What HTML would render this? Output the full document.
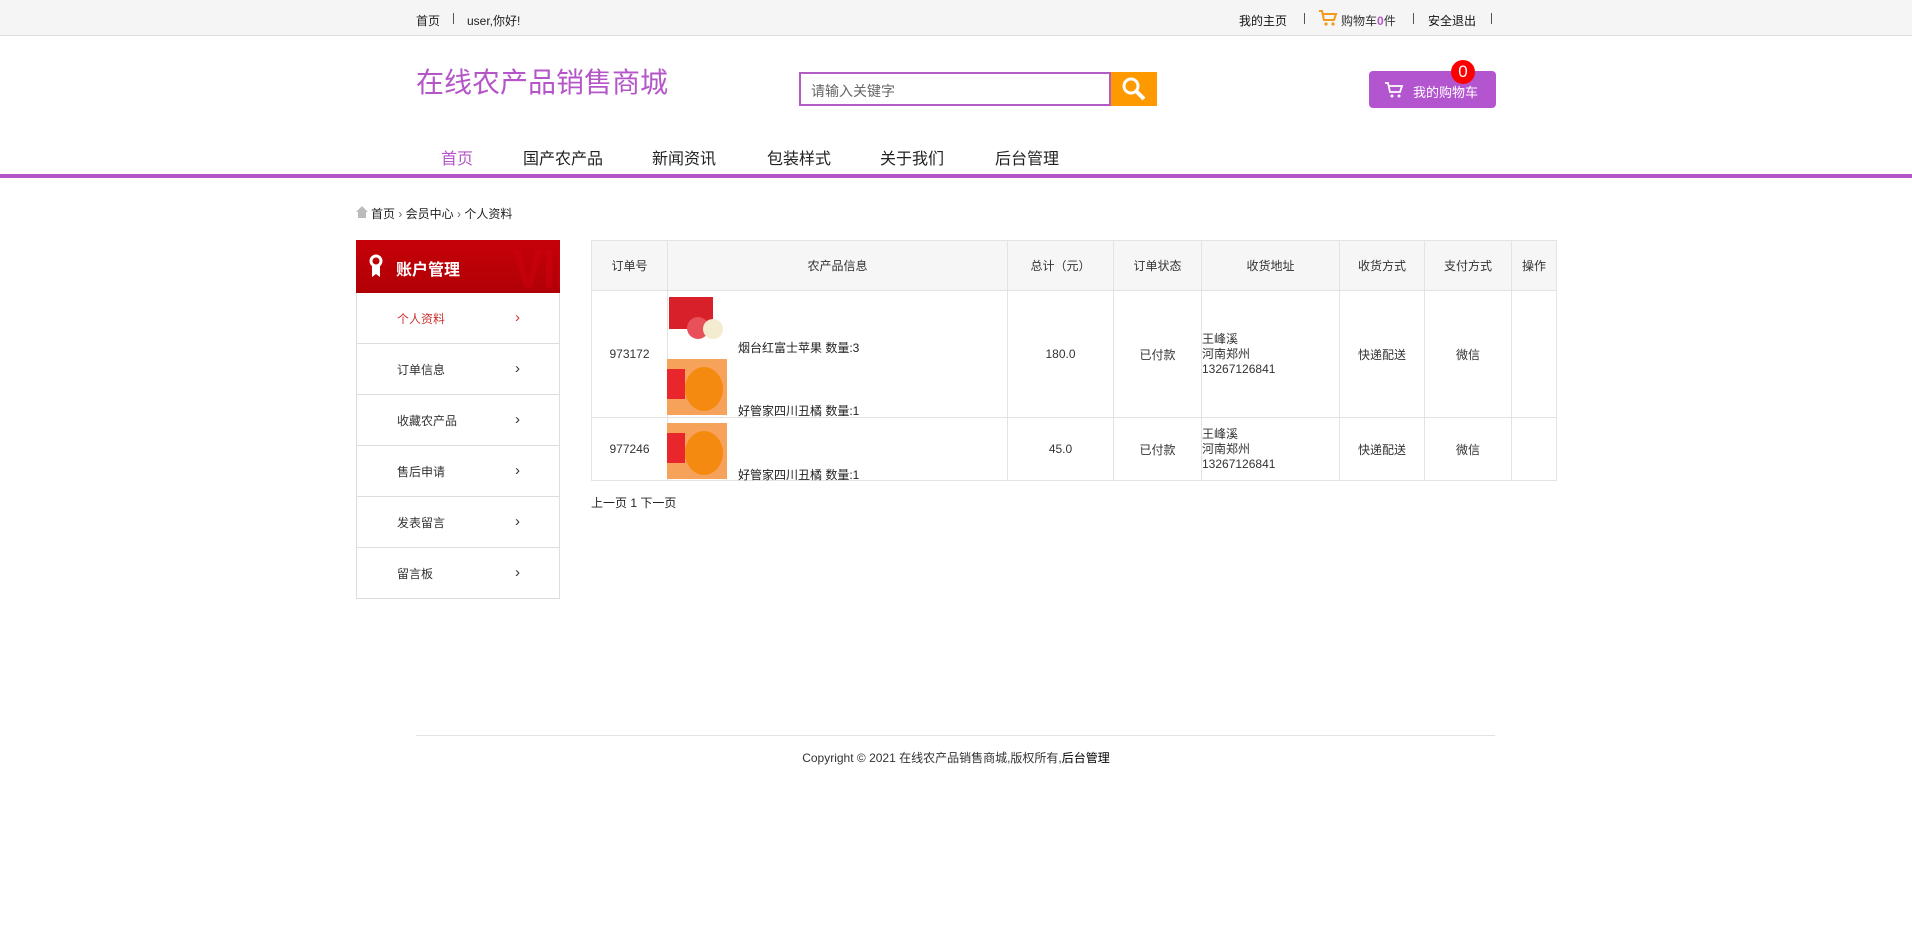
<!DOCTYPE html>
<html><head><meta charset="utf-8"><style>
*{margin:0;padding:0;box-sizing:border-box}
body{width:1912px;height:928px;background:#fff;font-family:"Liberation Sans","Noto Sans CJK SC",sans-serif;color:#333;position:relative;overflow:hidden;font-size:13px}
.a{position:absolute;white-space:nowrap}
.top{position:absolute;left:0;top:0;width:1912px;height:36px;background:#f5f5f5;border-bottom:1px solid #ddd}
.sep{position:absolute;top:13px;width:1px;height:11px;background:#555}
.nav{position:absolute;top:145px;font-size:16px;color:#222}
table{position:absolute;left:591px;top:240px;border-collapse:collapse;width:966px;font-size:12px;color:#333}
td,th{border:1px solid #e3e3e3;text-align:center;font-weight:normal}
th{background:#f6f6f6;height:50px}
.side{position:absolute;left:356px;width:204px;height:51px;border:1px solid #ddd;border-top:none;font-size:12px}
.side span{position:absolute;left:40px;top:17px}
.side i{position:absolute;left:158px;top:16px;font-style:normal;font-size:15px}
.apple{position:absolute;left:667px;width:60px;height:56px}
</style></head><body>
<div class="top"></div>
<div class="a" style="left:416px;top:12px;font-size:12px;color:#222">首页</div>
<div class="sep" style="left:453px"></div>
<div class="a" style="left:467px;top:12px;font-size:12px;color:#222">user,你好!</div>
<div class="a" style="left:1239px;top:12px;font-size:12px;color:#111">我的主页</div>
<div class="sep" style="left:1304px"></div>
<svg class="a" style="left:1318px;top:9px" width="20" height="18" viewBox="0 0 20 18"><path d="M1 2h3l2 9h10l2-6H5" fill="none" stroke="#f29a1a" stroke-width="2"/><circle cx="8" cy="15" r="1.6" fill="#f29a1a"/><circle cx="15" cy="15" r="1.6" fill="#f29a1a"/></svg>
<div class="a" style="left:1341px;top:12px;font-size:12px;color:#333">购物车<b style="color:#b455c8">0</b>件</div>
<div class="sep" style="left:1413px"></div>
<div class="a" style="left:1428px;top:12px;font-size:12px;color:#111">安全退出</div>
<div class="sep" style="left:1491px"></div>

<div class="a" style="left:416px;top:61px;font-size:28px;color:#b455c8">在线农产品销售商城</div>
<div class="a" style="left:799px;top:72px;width:312px;height:34px;border:2px solid #b35cc6;background:#fff"><span style="position:absolute;left:10px;top:7px;font-size:14px;color:#666">请输入关键字</span></div>
<div class="a" style="left:1111px;top:72px;width:46px;height:34px;background:#ff9900"><svg width="46" height="34"><circle cx="20" cy="14" r="7" fill="none" stroke="#fff" stroke-width="3"/><path d="M25 19l8 8" stroke="#fff" stroke-width="4"/></svg></div>
<div class="a" style="left:1369px;top:71px;width:127px;height:37px;background:#b455d0;border-radius:4px"><svg style="position:absolute;left:15px;top:10px" width="20" height="18" viewBox="0 0 20 18"><path d="M1 2h3l2 9h10l2-6H5" fill="none" stroke="#fff" stroke-width="1.8"/><circle cx="8" cy="15" r="1.5" fill="#fff"/><circle cx="15" cy="15" r="1.5" fill="#fff"/></svg><span style="position:absolute;left:44px;top:11px;color:#fff;font-size:13px">我的购物车</span></div>
<div class="a" style="left:1451px;top:60px;width:24px;height:24px;border-radius:50%;background:#f00;color:#fff;font-size:17px;text-align:center;line-height:24px">0</div>

<div class="nav" style="left:441px;color:#b455c8">首页</div>
<div class="nav" style="left:523px">国产农产品</div>
<div class="nav" style="left:652px">新闻资讯</div>
<div class="nav" style="left:767px">包装样式</div>
<div class="nav" style="left:880px">关于我们</div>
<div class="nav" style="left:995px">后台管理</div>
<div class="a" style="left:0;top:174px;width:1912px;height:4px;background:#b455c8"></div>

<svg class="a" style="left:356px;top:206px" width="12" height="12"><path d="M6 0L0 6h2v6h8V6h2z" fill="#bbb"/></svg>
<div class="a" style="left:371px;top:205px;font-size:12px;color:#222">首页 <span style="color:#666">›</span> 会员中心 <span style="color:#666">›</span> 个人资料</div>

<div class="a" style="left:356px;top:240px;width:204px;height:53px;background:linear-gradient(#c60008,#b00006);overflow:hidden">
<span style="position:absolute;left:148px;top:-4px;font-size:56px;color:rgba(210,0,20,.5);font-weight:bold;transform:scaleX(.8)">VIP</span>
<svg style="position:absolute;left:13px;top:14px" width="14" height="24"><circle cx="7" cy="7" r="5" fill="none" stroke="#fff" stroke-width="3"/><path d="M3 12v11l4-3 4 3V12" fill="#fff"/></svg>
<span style="position:absolute;left:40px;top:16px;font-size:16px;color:#fff;font-weight:bold">账户管理</span></div>
<div class="side" style="top:293px"><span style="color:#c33">个人资料</span><i style="color:#c33">›</i></div>
<div class="side" style="top:344px"><span>订单信息</span><i>›</i></div>
<div class="side" style="top:395px"><span>收藏农产品</span><i>›</i></div>
<div class="side" style="top:446px"><span>售后申请</span><i>›</i></div>
<div class="side" style="top:497px"><span>发表留言</span><i>›</i></div>
<div class="side" style="top:548px"><span>留言板</span><i>›</i></div>

<table>
<tr><th style="width:76px">订单号</th><th style="width:340px">农产品信息</th><th style="width:106px">总计（元）</th><th style="width:88px">订单状态</th><th style="width:138px">收货地址</th><th style="width:85px">收货方式</th><th style="width:87px">支付方式</th><th>操作</th></tr>
<tr style="height:127px"><td>973172</td><td></td><td>180.0</td><td>已付款</td><td style="text-align:left;line-height:15px">王峰溪<br>河南郑州<br>13267126841</td><td>快递配送</td><td>微信</td><td></td></tr>
<tr style="height:63px"><td>977246</td><td></td><td>45.0</td><td>已付款</td><td style="text-align:left;line-height:15px">王峰溪<br>河南郑州<br>13267126841</td><td>快递配送</td><td>微信</td><td></td></tr>
</table>
<div class="apple" style="top:293px"><div style="position:absolute;left:2px;top:4px;width:44px;height:32px;background:#d8202a"></div><div style="position:absolute;left:20px;top:24px;width:22px;height:22px;border-radius:50%;background:#e8505a"></div><div style="position:absolute;left:36px;top:26px;width:20px;height:20px;border-radius:50%;background:#f3ecd0"></div></div>
<div class="apple" style="top:359px;background:#f7a25a"><div style="position:absolute;left:0;top:10px;width:18px;height:30px;background:#e8262c"></div><div style="position:absolute;left:18px;top:8px;width:38px;height:44px;border-radius:50%;background:#f58a10"></div></div>
<div class="apple" style="top:423px;background:#f7a25a"><div style="position:absolute;left:0;top:10px;width:18px;height:30px;background:#e8262c"></div><div style="position:absolute;left:18px;top:8px;width:38px;height:44px;border-radius:50%;background:#f58a10"></div></div>
<div class="a" style="left:738px;top:339px;font-size:12px;color:#222">烟台红富士苹果 数量:3</div>
<div class="a" style="left:738px;top:402px;font-size:12px;color:#222">好管家四川丑橘 数量:1</div>
<div class="a" style="left:738px;top:466px;font-size:12px;color:#222">好管家四川丑橘 数量:1</div>

<div class="a" style="left:591px;top:494px;font-size:12px;color:#222">上一页 1 下一页</div>
<div class="a" style="left:416px;top:735px;width:1079px;height:1px;background:#e3e3e3"></div>
<div class="a" style="left:0;top:749px;width:1912px;text-align:center;font-size:12px;color:#333">Copyright © 2021 在线农产品销售商城,版权所有,<span style="color:#000">后台管理</span></div>
</body></html>
